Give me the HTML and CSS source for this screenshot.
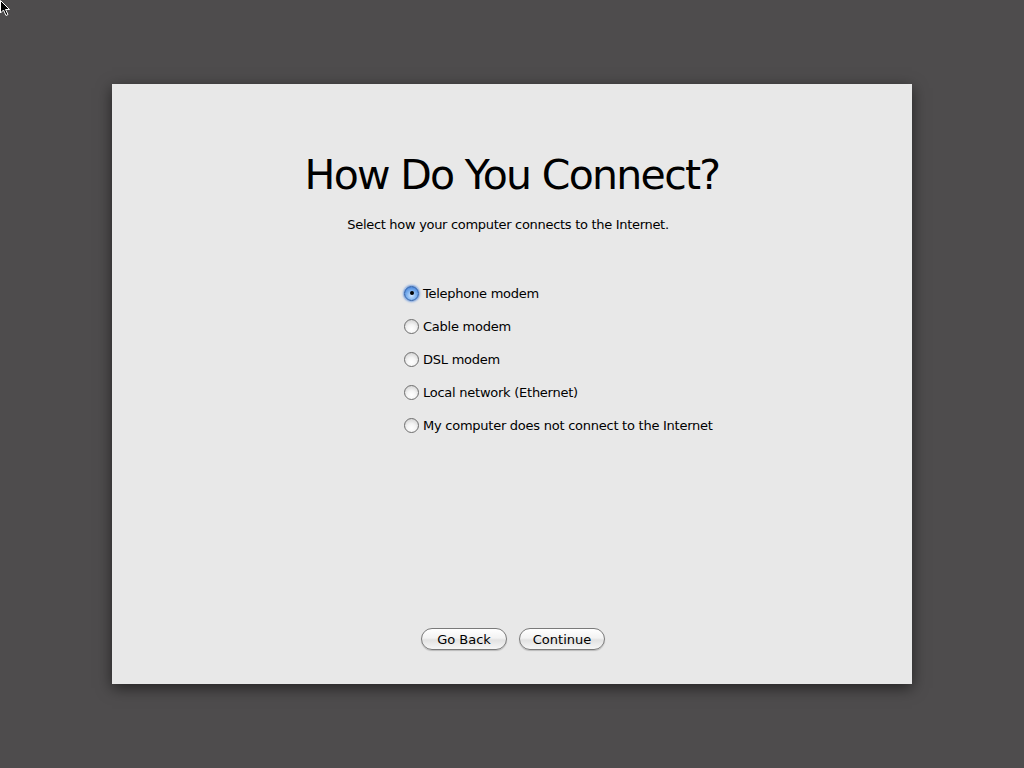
FILE: index.html
```html
<!DOCTYPE html>
<html>
<head>
<meta charset="utf-8">
<link rel="stylesheet" href="styles.css">
</head>
<body>
<svg class="cursor" width="12" height="18" viewBox="0 0 12 18"><path d="M0.5 0.5 L0.5 13 L3.5 10 L6 15.5 L8 14.5 L5.5 9.5 L9.5 9.5 Z" fill="#000" stroke="#fff" stroke-width="1"/></svg>
<div class="screen">
  <div class="panel">
    <h1 class="title">How Do You Connect?</h1>
    <p class="subtitle">Select how your computer connects to the Internet.</p>
    <div class="options">
      <label class="option"><span class="radio checked"><span class="dot"></span></span><span class="label">Telephone modem</span></label>
      <label class="option"><span class="radio"></span><span class="label">Cable modem</span></label>
      <label class="option"><span class="radio"></span><span class="label">DSL modem</span></label>
      <label class="option"><span class="radio"></span><span class="label">Local network (Ethernet)</span></label>
      <label class="option"><span class="radio"></span><span class="label">My computer does not connect to the Internet</span></label>
    </div>
    <div class="buttons">
      <button class="btn back">Go Back</button>
      <button class="btn cont">Continue</button>
    </div>
  </div>
</div>
</body>
</html>
```
FILE: styles.css
```css
html, body {
  margin: 0;
  padding: 0;
  width: 1024px;
  height: 768px;
  background: #4e4c4d;
  overflow: hidden;
  font-family: "DejaVu Sans", "Liberation Sans", sans-serif;
}
.cursor {
  position: absolute;
  left: 0;
  top: 0;
}
.screen {
  height: 768px;
  display: flex;
  align-items: center;
  justify-content: center;
}
.panel {
  width: 800px;
  height: 600px;
  background: #e8e8e8;
  box-shadow: 0 4px 14px rgba(0,0,0,0.55);
  display: flex;
  flex-direction: column;
  box-sizing: border-box;
  padding-top: 66px;
}
.title {
  margin: 0;
  text-align: center;
  font-weight: normal;
  font-size: 41px;
  line-height: 50px;
  color: #000;
  letter-spacing: -1.7px;
}
.subtitle {
  margin: 16px 0 0 0;
  text-align: center;
  font-size: 13px;
  line-height: 18px;
  color: #000;
  padding-right: 8px;
  letter-spacing: -0.3px;
}
.options {
  margin: 50px 0 0 292px;
  display: flex;
  flex-direction: column;
  gap: 15px;
}
.option {
  display: flex;
  align-items: center;
  height: 18px;
  font-size: 13px;
  color: #000;
  letter-spacing: -0.25px;
}
.label {
  padding-top: 1px;
}
.radio {
  width: 15px;
  height: 15px;
  border-radius: 50%;
  border: 1px solid #6e6e6e;
  background: radial-gradient(circle at 50% 70%, #ffffff 0%, #f4f4f4 40%, #c8c8c8 100%);
  box-sizing: border-box;
  margin-right: 4px;
  display: flex;
  align-items: center;
  justify-content: center;
  flex: none;
}
.radio.checked {
  border-color: #2a5da8;
  background: radial-gradient(circle at 50% 65%, #cfe6ff 0%, #7fb2ee 45%, #2f6fcf 100%);
  box-shadow: 0 0 2px 1px rgba(70,130,220,0.7);
}
.dot {
  width: 4px;
  height: 4px;
  border-radius: 50%;
  background: #000;
}
.buttons {
  margin-top: auto;
  margin-bottom: 34px;
  display: flex;
  justify-content: center;
  gap: 12px;
  padding-left: 2px;
}
.btn {
  height: 22px;
  border-radius: 11px;
  border: 1px solid #7a7a7a;
  background: linear-gradient(#ffffff 0%, #f3f3f3 45%, #e2e2e2 55%, #f6f6f6 100%);
  font-family: "DejaVu Sans", "Liberation Sans", sans-serif;
  font-size: 13px;
  color: #000;
  padding: 0;
  box-shadow: 0 1px 1px rgba(0,0,0,0.2);
}
.back { width: 86px; }
.cont { width: 86px; }
```
